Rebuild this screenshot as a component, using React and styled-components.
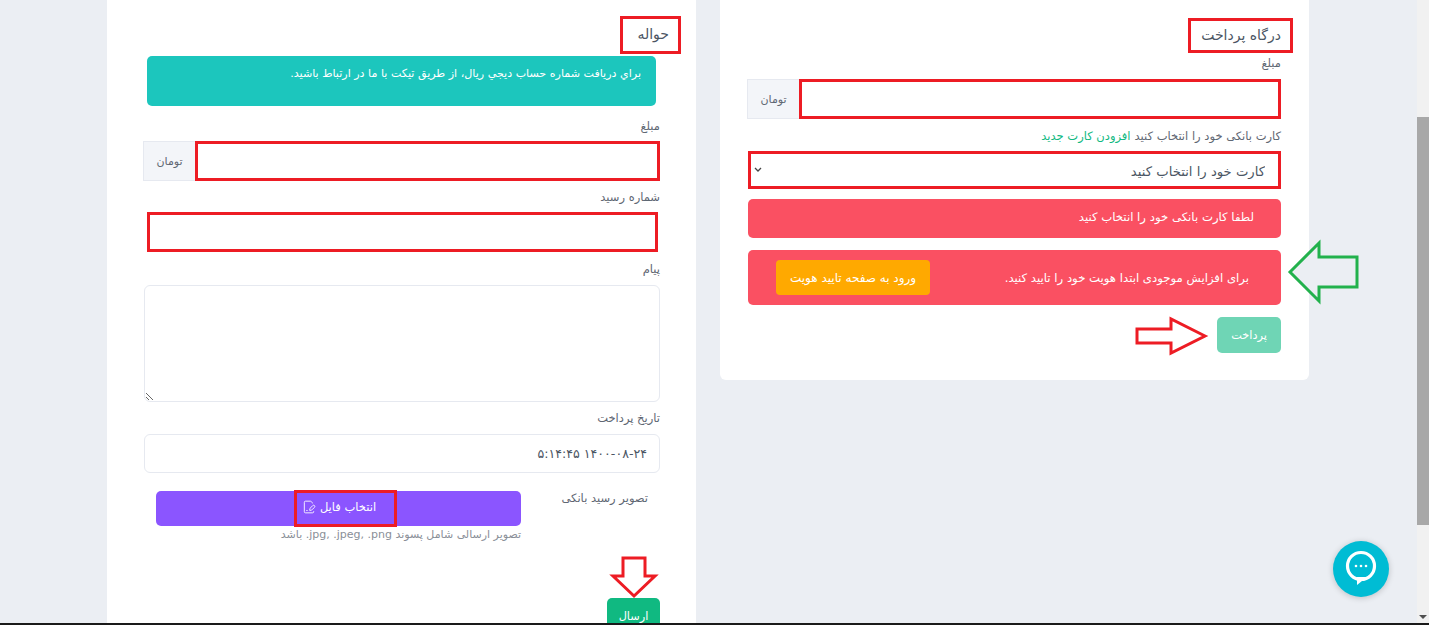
import React from "react";
import styled, { createGlobalStyle } from "styled-components";
import { FilePenLine } from "lucide-react";

const Global = createGlobalStyle`
  html, body {
    margin: 0;
    padding: 0;
    height: 100%;
    overflow: hidden;
  }
  body {
    font-family: "DejaVu Sans", "Noto Sans", sans-serif;
    background: #ebeef3;
  }
`;

const Page = styled.div`
  position: relative;
  display: flex;
  height: 625px;
  box-sizing: border-box;
  border-bottom: 2px solid #1a1a1a;
  overflow: hidden;
`;

const Main = styled.main`
  flex: 1;
  display: grid;
  grid-template-columns: 589px 589px;
  column-gap: 24px;
  justify-content: center;
  align-items: start;
  direction: rtl;
  padding-right: 1px;
`;

const Card = styled.section`
  position: relative;
  background: #fff;
  border-radius: 0 0 6px 6px;
  box-sizing: border-box;
  padding: ${(p) => p.$pad};
  min-height: ${(p) => p.$minHeight || "auto"};
`;

const Title = styled.h4`
  display: inline-block;
  margin: 0;
  font-size: 14px;
  font-weight: 400;
  color: #4b5563;
  border: 3px solid #ed1c24;
  box-sizing: border-box;
  height: ${(p) => p.$h};
  line-height: ${(p) => p.$lh};
  padding: ${(p) => p.$pad};
  margin-right: ${(p) => p.$right};
`;

const Label = styled.label`
  display: block;
  font-size: 11.5px;
  line-height: 14px;
  color: #5f6773;
  margin-top: ${(p) => p.$top};
  margin-bottom: ${(p) => p.$bottom};
`;

const InputGroup = styled.div`
  display: flex;
  height: ${(p) => p.$h};
  margin-left: ${(p) => p.$bleed || 0};
`;

const TextInput = styled.input`
  flex: 1;
  min-width: 0;
  box-sizing: border-box;
  height: ${(p) => p.$h || "100%"};
  margin: ${(p) => p.$margin || 0};
  width: ${(p) => p.$w || "auto"};
  display: block;
  border: 3px solid #ed1c24;
  background: #fff;
  outline: none;
`;

const Addon = styled.span`
  display: flex;
  align-items: center;
  justify-content: center;
  width: 52px;
  box-sizing: border-box;
  background: #f3f5f9;
  border: 1px solid #e6e9f0;
  border-right: none;
  font-size: 11px;
  color: #5f6773;
`;

const CardSelectLabel = styled.div`
  font-size: 11.5px;
  line-height: 14px;
  color: #5f6773;
  margin-top: 10px;
  margin-bottom: 8px;
`;

const GreenLink = styled.a`
  color: #10b981;
  margin-right: 4px;
`;

const Select = styled.select`
  display: block;
  width: 533px;
  height: 38px;
  box-sizing: border-box;
  border: 3px solid #ed1c24;
  background: #fff url("data:image/svg+xml,%3Csvg xmlns='http://www.w3.org/2000/svg' width='8' height='6'%3E%3Cpath d='M1 1l3 3 3-3' fill='none' stroke='%23444' stroke-width='1.3'/%3E%3C/svg%3E") no-repeat 3px center;
  appearance: none;
  color: #4b5563;
  font-family: inherit;
  font-size: 13.2px;
  padding: 2px 13px 0;
  border-radius: 0;
  outline: none;
`;

const Alert = styled.div`
  background: ${(p) => p.$bg || "#fa5062"};
  border-radius: 5px;
  color: #fff;
  font-size: ${(p) => p.$size || "11.7px"};
  box-sizing: border-box;
  height: ${(p) => p.$h};
  margin: ${(p) => p.$margin};
  padding: ${(p) => p.$pad};
  display: ${(p) => (p.$row ? "flex" : "block")};
  align-items: center;
  justify-content: space-between;
  white-space: nowrap;
`;

const WarnButton = styled.button`
  background: #ffa900;
  color: #fff;
  border: none;
  border-radius: 4px;
  width: 154px;
  height: 35px;
  font-family: inherit;
  font-size: 12px;
  padding: 0;
  white-space: nowrap;
`;

const SubmitButton = styled.button`
  display: block;
  background: ${(p) => p.$bg};
  color: #fff;
  border: none;
  border-radius: 5px;
  width: ${(p) => p.$w};
  height: 36px;
  margin-top: ${(p) => p.$top};
  font-family: inherit;
  font-size: 11.3px;
  padding: 0;
`;

const Area = styled.textarea`
  display: block;
  width: 516px;
  height: 117px;
  box-sizing: border-box;
  border: 1px solid #e6e9f0;
  border-radius: 6px;
  background: #fff;
  outline: none;
`;

const DateInput = styled.input`
  display: block;
  width: 516px;
  height: 39px;
  box-sizing: border-box;
  border: 1px solid #e6e9f0;
  border-radius: 6px;
  padding: 0 12px;
  font-family: inherit;
  font-size: 12.6px;
  color: #4b5563;
  background: #fff;
  outline: none;
`;

const UploadRow = styled.div`
  display: flex;
  align-items: flex-start;
  margin-top: 18px;
`;

const UploadLabel = styled.span`
  width: 139px;
  box-sizing: border-box;
  padding-right: 12px;
  font-size: 11.5px;
  line-height: 14px;
  color: #5f6773;
`;

const UploadCol = styled.div`
  width: 365px;
`;

const PurpleButton = styled.div`
  height: 35px;
  border-radius: 5px;
  background: #8b55ff;
  display: flex;
  justify-content: center;
  padding-left: 14px;
`;

const FileBox = styled.span`
  display: flex;
  align-items: center;
  justify-content: center;
  gap: 4px;
  width: 103px;
  height: 37px;
  margin-top: -1px;
  box-sizing: border-box;
  border: 3px solid #ed1c24;
  padding: 0 13px 3px 0;
  color: #fff;
  font-size: 11.5px;
  white-space: nowrap;
`;

const Help = styled.div`
  font-size: 11px;
  line-height: 14px;
  margin-top: 2px;
  color: #8a8f98;
  white-space: nowrap;
`;

const Arrow = styled.svg`
  position: absolute;
  left: ${(p) => p.$x}px;
  top: ${(p) => p.$y}px;
  overflow: visible;
  fill: #fff;
`;

const ScrollBar = styled.aside`
  position: relative;
  width: 12px;
  flex: none;
  background: #f1f1f1;
`;

const ScrollThumb = styled.div`
  position: absolute;
  top: 117px;
  left: 0;
  right: 0;
  height: 408px;
  background: #a8a8a8;
`;

const ScrollDown = styled.div`
  position: absolute;
  left: 2px;
  bottom: 4px;
  width: 0;
  height: 0;
  border-left: 4px solid transparent;
  border-right: 4px solid transparent;
  border-top: 4px solid #505050;
`;

const Chat = styled.button`
  position: absolute;
  left: 1333px;
  top: 541px;
  width: 56px;
  height: 56px;
  border: none;
  border-radius: 50%;
  padding: 0;
  background: #00bcd4;
  box-shadow: 0 1px 6px rgba(0, 0, 0, 0.2);
  display: flex;
  align-items: center;
  justify-content: center;
`;

export default function App() {
  return (
    <Page>
      <Global />
      <Main>
        <Card $pad="18px 28px 0" $minHeight="380px">
          <Title $h="35px" $lh="28px" $right="-12px" $pad="0 9px 0 10px">درگاه پرداخت</Title>
          <Label $top="3px" $bottom="9px">مبلغ</Label>
          <InputGroup $h="40px" $bleed="-1px">
            <TextInput />
            <Addon>تومان</Addon>
          </InputGroup>
          <CardSelectLabel>
            کارت بانکی خود را انتخاب کنید
            <GreenLink>افزودن کارت جدید</GreenLink>
          </CardSelectLabel>
          <Select defaultValue="none">
            <option value="none">کارت خود را انتخاب کنید</option>
          </Select>
          <Alert $h="39px" $margin="10px 0 0" $pad="11px 27px 0 0">
            لطفا کارت بانکی خود را انتخاب کنید
          </Alert>
          <Alert $row $h="55px" $margin="12px 0 0" $pad="0 32px 0 28px">
            برای افزایش موجودی ابتدا هویت خود را تایید کنید.
            <WarnButton>ورود به صفحه تایید هویت</WarnButton>
          </Alert>
          <SubmitButton $bg="#6fd5b5" $w="64px" $top="12px">پرداخت</SubmitButton>
        </Card>

        <Card $pad="16px 36px 0">
          <Title $h="38px" $lh="30px" $right="-21px" $pad="0 9px 0 14px">حواله</Title>
          <Alert $bg="#1cc6bd" $size="11.1px" $h="50px" $margin="2px 4px 0" $pad="11px 15px 0 0">
            براي دريافت شماره حساب ديجي ريال، از طريق تيکت با ما در ارتباط باشيد.
          </Alert>
          <Label $top="13px" $bottom="8px">مبلغ</Label>
          <InputGroup $h="40px">
            <TextInput />
            <Addon>تومان</Addon>
          </InputGroup>
          <Label $top="9px" $bottom="8px">شماره رسید</Label>
          <TextInput $h="40px" $w="511px" $margin="0 2px 0 0" />
          <Label $top="10px" $bottom="9px">پیام</Label>
          <Area />
          <Label $top="9px" $bottom="9px">تاریخ پرداخت</Label>
          <DateInput readOnly value="۱۴۰۰-۰۸-۲۴ ۵:۱۴:۴۵" />
          <UploadRow>
            <UploadLabel>تصویر رسید بانکی</UploadLabel>
            <UploadCol>
              <PurpleButton>
                <FileBox>
                  انتخاب فایل
                  <FilePenLine size={14} strokeWidth={1.5} />
                </FileBox>
              </PurpleButton>
              <Help>
                تصویر ارسالی شامل پسوند <bdi dir="ltr">.jpg, .jpeg, .png</bdi> باشد
              </Help>
            </UploadCol>
          </UploadRow>
          <SubmitButton $bg="#10b981" $w="53px" $top="56px">ارسال</SubmitButton>
        </Card>
      </Main>
      <ScrollBar>
        <ScrollThumb />
        <ScrollDown />
      </ScrollBar>

      <Arrow $x={1288} $y={241} width="70" height="62" viewBox="0 0 70 62">
        <path d="M2 31 L31 2 V16 H69 V46 H31 V60 Z" stroke="#22b14c" strokeWidth="3" fill="#ebeef3" />
      </Arrow>
      <Arrow $x={1136} $y={318} width="71" height="36" viewBox="0 0 71 36">
        <path d="M69 18 L35 1 V11 H1 V25 H35 V35 Z" stroke="#ed1c24" strokeWidth="3" />
      </Arrow>
      <Arrow $x={612} $y={557} width="44" height="40" viewBox="0 0 44 40">
        <path d="M22 39 L1 19 H11 V1 H33 V19 H43 Z" stroke="#ed1c24" strokeWidth="3" />
      </Arrow>

      <Chat aria-label="chat">
        <svg width="34" height="38" viewBox="0 0 34 38">
          <circle cx="17" cy="16" r="13.5" fill="none" stroke="#fff" strokeWidth="3.2" />
          <path d="M13 27 L13 35 L23 27 Z" fill="#fff" />
          <circle cx="12" cy="16" r="1.3" fill="#fff" />
          <circle cx="17" cy="16" r="1.3" fill="#fff" />
          <circle cx="22" cy="16" r="1.3" fill="#fff" />
        </svg>
      </Chat>
    </Page>
  );
}
